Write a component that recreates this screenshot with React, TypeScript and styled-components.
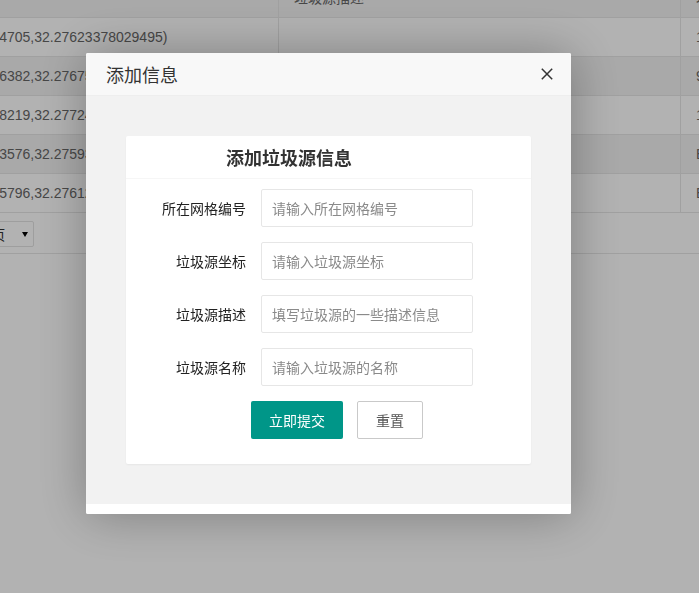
import React from "react";
import styled, { createGlobalStyle } from "styled-components";

const GlobalStyle = createGlobalStyle`
  html, body { margin: 0; padding: 0; background: #fff; overflow: hidden; }
  body {
    font-family: "Liberation Sans", Arial, "Noto Sans CJK SC", sans-serif;
    font-size: 14px;
    color: #666;
  }
  * { box-sizing: border-box; }
`;

const Page = styled.div`
  position: relative;
  width: 699px;
  height: 593px;
  overflow: hidden;
`;

const TableWrap = styled.div`
  margin-left: -67px;
  margin-top: -21px;
  width: 1000px;
`;

const Row = styled.div<{ $shaded?: boolean }>`
  display: flex;
  height: 39px;
  border-bottom: 1px solid #e6e6e6;
  background: ${(p) => (p.$shaded ? "#f2f2f2" : "#fff")};
`;

const Cell = styled.div<{ $w: number; $pl?: number }>`
  flex: 0 0 ${(p) => p.$w}px;
  width: ${(p) => p.$w}px;
  padding: 0 15px 0 ${(p) => p.$pl ?? 15}px;
  border-right: 1px solid #e6e6e6;
  display: flex;
  align-items: center;
  white-space: nowrap;
  overflow: hidden;
  line-height: 20px;
  color: #666;
`;

const Pager = styled.div`
  height: 41px;
  border-bottom: 1px solid #e6e6e6;
  padding: 8px 0 0 15px;
`;

const Select = styled.div`
  display: inline-flex;
  align-items: center;
  height: 26px;
  padding: 0 5px 0 5px;
  border: 1px solid #e2e2e2;
  border-radius: 2px;
  color: #333;
  white-space: nowrap;
`;

const Caret = styled.span`
  display: inline-block;
  margin-left: 17px;
  width: 0;
  height: 0;
  border-left: 3px solid transparent;
  border-right: 3px solid transparent;
  border-top: 5px solid #000;
`;

const Shade = styled.div`
  position: fixed;
  inset: 0;
  background: rgba(0, 0, 0, 0.3);
`;

const Layer = styled.div`
  position: fixed;
  left: 86px;
  top: 53px;
  width: 485px;
  background: #fff;
  border-radius: 2px;
  box-shadow: 1px 1px 50px rgba(0, 0, 0, 0.3);
  overflow: hidden;
`;

const LayerTitle = styled.div`
  height: 43px;
  display: flex;
  align-items: center;
  justify-content: space-between;
  padding: 0 18px 0 20px;
  background: #f8f8f8;
  border-bottom: 1px solid #eee;
  font-family: "Noto Sans CJK SC", sans-serif;
  font-size: 18px;
  color: #333;
`;

const Close = styled.button`
  border: 0;
  background: none;
  padding: 0;
  width: 12px;
  height: 12px;
  display: flex;
  cursor: pointer;
`;

const LayerContent = styled.div`
  background: #fff;
  padding-bottom: 10px;
`;

const Inner = styled.div`
  background: #f2f2f2;
  padding: 40px;
`;

const Card = styled.div`
  background: #fff;
  border-radius: 2px;
  box-shadow: 0 1px 2px 0 rgba(0, 0, 0, 0.05);
`;

const CardHeader = styled.div`
  height: 43px;
  line-height: 42px;
  padding-left: 100px;
  border-bottom: 1px solid #f6f6f6;
  font-family: "Noto Sans CJK SC", sans-serif;
  font-size: 18px;
  font-weight: 700;
  color: #333;
`;

const CardBody = styled.div`
  padding: 10px 0;
`;

const FormItem = styled.div`
  display: flex;
  margin-bottom: 15px;
`;

const Label = styled.label`
  flex: 0 0 135px;
  padding-right: 15px;
  text-align: right;
  line-height: 38px;
  white-space: nowrap;
  font-family: "Noto Sans CJK SC", sans-serif;
  font-size: 14px;
  color: #222;
`;

const Input = styled.input`
  width: 212px;
  height: 38px;
  border: 1px solid #e6e6e6;
  border-radius: 2px;
  padding: 0 10px;
  font-family: "Noto Sans CJK SC", sans-serif;
  font-size: 14px;
  color: #333;
  background: #fff;
  outline: none;
  &::placeholder { color: #8a8a8a; }
`;

const ButtonRow = styled.div`
  display: flex;
  gap: 14px;
  padding-left: 125px;
  margin-bottom: 15px;
`;

const Button = styled.button<{ $primary?: boolean }>`
  height: 38px;
  padding: 0 18px;
  border-radius: 2px;
  border: ${(p) => (p.$primary ? "0" : "1px solid #c9c9c9")};
  background: ${(p) => (p.$primary ? "#009688" : "#fff")};
  color: ${(p) => (p.$primary ? "#fff" : "#555")};
  font-family: "Noto Sans CJK SC", sans-serif;
  font-size: 14px;
  line-height: 36px;
  cursor: pointer;
`;

const rows = [
  ["(118.7864705,32.27623378029495)", "", "1"],
  ["(118.7866382,32.27675120833112)", "", "9"],
  ["(118.7868219,32.27724463120871)", "", "1"],
  ["(118.7863576,32.27593306772145)", "", "E"],
  ["(118.7865796,32.27612788519033)", "", "E"],
];

const fields = [
  ["所在网格编号", "请输入所在网格编号"],
  ["垃圾源坐标", "请输入垃圾源坐标"],
  ["垃圾源描述", "填写垃圾源的一些描述信息"],
  ["垃圾源名称", "请输入垃圾源的名称"],
];

export default function App() {
  return (
    <>
      <GlobalStyle />
      <Page>
        <TableWrap>
          <Row $shaded>
            <Cell $w={346}>坐标</Cell>
            <Cell $w={402}>垃圾源描述</Cell>
            <Cell $w={200}>垃圾源名称</Cell>
          </Row>
          {rows.map((r, i) => (
            <Row key={i} $shaded={i % 2 === 1}>
              <Cell $w={346} $pl={12}>{r[0]}</Cell>
              <Cell $w={402}>{r[1]}</Cell>
              <Cell $w={200}>{r[2]}</Cell>
            </Row>
          ))}
          <Pager>
            <Select>
              10 条/页
              <Caret />
            </Select>
          </Pager>
        </TableWrap>

        <Shade />
        <Layer>
          <LayerTitle>
            <span>添加信息</span>
            <Close aria-label="关闭">
              <svg width="12" height="12" viewBox="0 0 12 12">
                <path d="M0.8 0.8 L11.2 11.2 M11.2 0.8 L0.8 11.2" stroke="#333" strokeWidth="1.5" />
              </svg>
            </Close>
          </LayerTitle>
          <LayerContent>
            <Inner>
              <Card>
                <CardHeader>添加垃圾源信息</CardHeader>
                <CardBody>
                  {fields.map(([label, ph]) => (
                    <FormItem key={label}>
                      <Label>{label}</Label>
                      <Input placeholder={ph} />
                    </FormItem>
                  ))}
                  <ButtonRow>
                    <Button $primary>立即提交</Button>
                    <Button>重置</Button>
                  </ButtonRow>
                </CardBody>
              </Card>
            </Inner>
          </LayerContent>
        </Layer>
      </Page>
    </>
  );
}
